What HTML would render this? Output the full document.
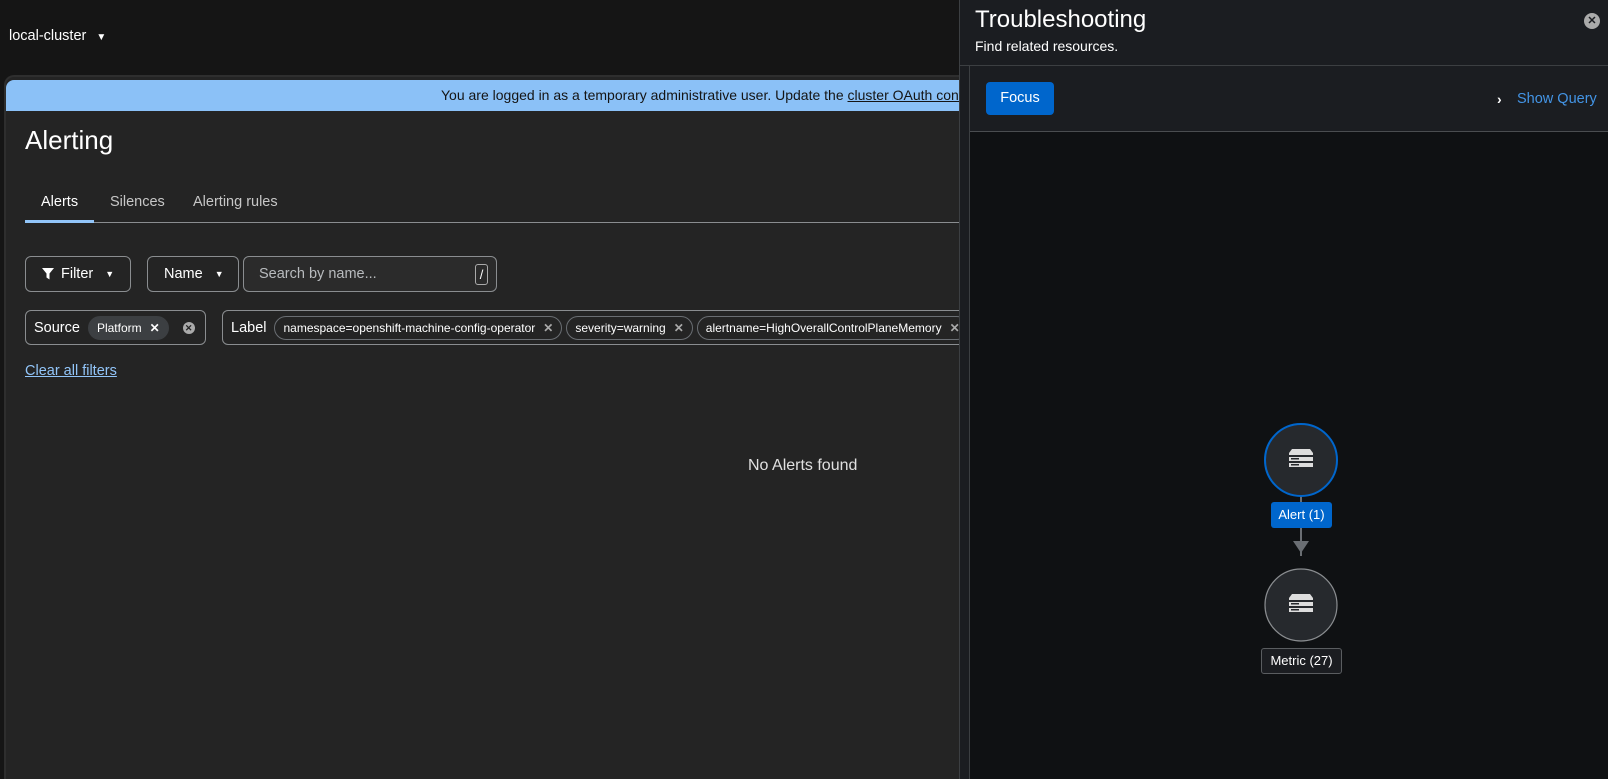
<!DOCTYPE html>
<html><head><meta charset="utf-8"><style>
*{box-sizing:border-box;margin:0;padding:0}
body{width:1608px;height:779px;overflow:hidden;background:#151515;font-family:"Liberation Sans",sans-serif;color:#e0e0e0;position:relative}
.abs{position:absolute}
.card{left:4px;top:75px;width:960px;height:704px;background:#242424;border-radius:10px 0 0 0;border-top:2px solid #2e2e2e;border-left:2px solid #2e2e2e;overflow:hidden}
.banner{left:6px;top:80px;width:960px;height:31px;background:#8bc1f7;border-radius:8px 0 0 0;color:#151515;font-size:14px;line-height:31px;white-space:nowrap;overflow:hidden}
.btn{border:1px solid #8a8d90;border-radius:6px;height:36px;font-size:14.5px;color:#fff;display:flex;align-items:center}
.chipgrp{border:1px solid #8a8d90;border-radius:6px;height:35px;font-size:14.5px;color:#fff;display:flex;align-items:center;padding-left:8px}
.chip{border:1px solid #6a6e73;border-radius:14px;height:24px;font-size:12px;color:#fff;display:flex;align-items:center;padding:0 8px;margin-left:4px;white-space:nowrap}
.x{color:#aaa;font-weight:bold;margin-left:8px;font-size:12px}
.drawer{left:959px;top:0;width:649px;height:779px;background:#1b1d21;border-left:1px solid #3c3f42}
</style></head><body>
<div class="abs" style="left:9px;top:28px;font-size:14.5px;color:#fff">local-cluster <span style="font-size:10px;margin-left:6px">▼</span></div>
<div class="abs card"></div>
<div class="abs banner"><span style="position:absolute;left:435px">You are logged in as a temporary administrative user. Update the <u>cluster OAuth configuration</u> to allow others to log in.</span></div>
<div class="abs" style="left:25px;top:125px;font-size:26px;color:#fff">Alerting</div>
<div class="abs" style="left:41px;top:194px;font-size:14.5px;color:#fff">Alerts</div>
<div class="abs" style="left:110px;top:194px;font-size:14.5px;color:#c7c7c7">Silences</div>
<div class="abs" style="left:193px;top:194px;font-size:14.5px;color:#c7c7c7">Alerting rules</div>
<div class="abs" style="left:25px;top:222px;width:934px;height:1px;background:#8a8d90"></div>
<div class="abs" style="left:25px;top:220px;width:69px;height:3px;background:#92c5f9"></div>
<div class="abs btn" style="left:25px;top:256px;width:106px;padding-left:15px"><svg width="14" height="14" viewBox="0 0 14 14"><path d="M1 1h12l-4.5 5.5v6l-3-2v-4z" fill="#fff"/></svg><span style="margin-left:6px">Filter</span><span style="font-size:9px;margin-left:12px">▼</span></div>
<div class="abs btn" style="left:147px;top:256px;width:92px;padding-left:16px">Name<span style="font-size:9px;margin-left:12px">▼</span></div>
<div class="abs btn" style="left:243px;top:256px;width:254px;padding-left:15px;background:#2b2b2b;color:#b8bbbe">Search by name...<span style="position:absolute;right:8px;top:7px;border:1px solid #aaa;border-radius:3px;width:13px;height:21px;color:#fff;font-size:13px;text-align:center;line-height:20px">/</span></div>
<div class="abs chipgrp" style="left:25px;top:310px;width:181px">Source<div class="chip" style="background:#3c3f42;border-color:#3c3f42;margin-left:8px">Platform<span class="x" style="color:#fff">✕</span></div><span style="margin-left:14px;width:12px;height:12px;border-radius:50%;background:#aaa;color:#242424;font-size:9px;font-weight:bold;text-align:center;line-height:12px">✕</span></div>
<div class="abs chipgrp" style="left:222px;top:310px;width:760px">Label<div class="chip" style="margin-left:8px">namespace=openshift-machine-config-operator<span class="x">✕</span></div><div class="chip">severity=warning<span class="x">✕</span></div><div class="chip">alertname=HighOverallControlPlaneMemory<span class="x">✕</span></div></div>
<div class="abs" style="left:25px;top:363px;font-size:14.5px;color:#92c5f9;text-decoration:underline">Clear all filters</div>
<div class="abs" style="left:748px;top:457px;font-size:16px;color:#e0e0e0">No Alerts found</div>

<div class="abs drawer">
 <div class="abs" style="left:15px;top:6px;font-size:24px;color:#fff">Troubleshooting</div>
 <div class="abs" style="left:15px;top:38px;font-size:14px;color:#fff">Find related resources.</div>
 <div class="abs" style="left:624px;top:13px;width:16px;height:16px;border-radius:50%;background:#aaa;color:#1b1d21;font-size:11px;font-weight:bold;text-align:center;line-height:16px">✕</div>
 <div class="abs" style="left:0;top:65px;width:649px;height:1px;background:#3c3f42"></div>
 <div class="abs" style="left:9px;top:66px;width:640px;height:713px;border-left:1px solid #3c3f42;background:#0f1113">
  <div class="abs" style="left:0;top:0;width:640px;height:66px;background:#1b1d21;border-bottom:1px solid #4a4d50"></div>
  <div class="abs" style="left:16px;top:16px;width:68px;height:33px;background:#0066cc;border-radius:4px;color:#fff;font-size:14.5px;text-align:center;line-height:33px">Focus</div>
  <div class="abs" style="left:527px;top:25px;font-size:14px;color:#fff;font-weight:bold">›</div>
  <div class="abs" style="left:547px;top:25px;font-size:14.5px;color:#4394e5">Show Query</div>
  <svg class="abs" style="left:0;top:0" width="640" height="713">
   <line x1="331" y1="430" x2="331" y2="490" stroke="#6a6e73" stroke-width="2"/>
   <path d="M323 475h16l-8 12z" fill="#6a6e73"/>
   <circle cx="331" cy="394" r="36" fill="#26292d" stroke="#0066cc" stroke-width="2"/>
   <circle cx="331" cy="539" r="36" fill="#26292d" stroke="#8a8d90" stroke-width="1.2"/>
   <g fill="#ddd"><path d="M319 387l3-4h18l3 4v2h-24z"/><rect x="319" y="391" width="24" height="4"/><rect x="319" y="397" width="24" height="4"/>
   <g fill="#26292d"><rect x="321" y="392" width="8" height="1.5"/><rect x="321" y="398" width="8" height="1.5"/></g></g>
   <g fill="#ddd"><path d="M319 532l3-4h18l3 4v2h-24z"/><rect x="319" y="536" width="24" height="4"/><rect x="319" y="542" width="24" height="4"/>
   <g fill="#26292d"><rect x="321" y="537" width="8" height="1.5"/><rect x="321" y="543" width="8" height="1.5"/></g></g>
  </svg>
  <div class="abs" style="left:301px;top:436px;width:61px;height:26px;background:#0066cc;border-radius:3px;color:#fff;font-size:13px;text-align:center;line-height:26px">Alert (1)</div>
  <div class="abs" style="left:291px;top:582px;width:81px;height:26px;background:#1b1d21;border:1px solid #5a5d60;border-radius:3px;color:#fff;font-size:13px;text-align:center;line-height:24px">Metric (27)</div>
 </div>
</div>
</body></html>
